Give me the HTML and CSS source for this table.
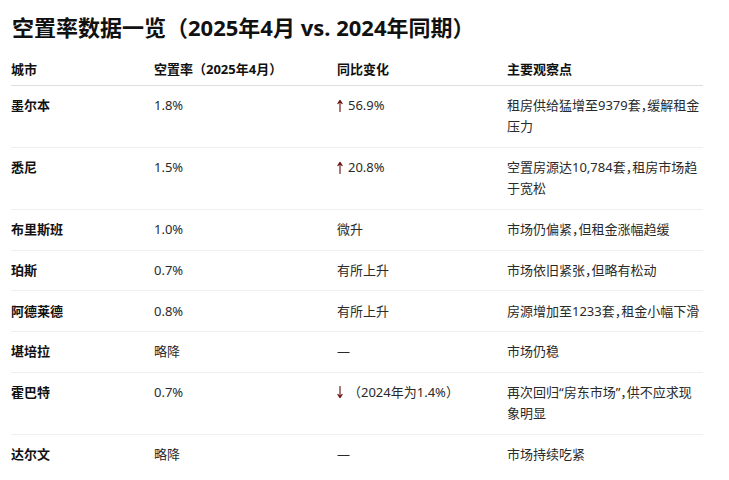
FILE: index.html
```html
<!DOCTYPE html>
<html lang="zh-CN">
<head>
<meta charset="utf-8">
<title>空置率数据一览</title>
<link rel="stylesheet" href="styles.css">
</head>
<body>
<main class="page">
  <h1 class="title">空置率数据一览（2025年4月 vs. 2024年同期）</h1>
  <table class="data">
    <colgroup>
      <col class="c-city">
      <col class="c-rate">
      <col class="c-change">
      <col class="c-note">
    </colgroup>
    <thead>
      <tr>
        <th>城市</th>
        <th>空置率（2025年4月）</th>
        <th>同比变化</th>
        <th>主要观察点</th>
      </tr>
    </thead>
    <tbody>
      <tr>
        <td class="city">墨尔本</td>
        <td>1.8%</td>
        <td><svg class="arrow" viewBox="0 0 6 13" aria-label="上升"><path d="M3 1.6V12.6M0.9 4.6L3 1.4L5.1 4.6"/></svg>56.9%</td>
        <td class="note">租房供给猛增至9379套，缓解租金压力</td>
      </tr>
      <tr>
        <td class="city">悉尼</td>
        <td>1.5%</td>
        <td><svg class="arrow" viewBox="0 0 6 13" aria-label="上升"><path d="M3 1.6V12.6M0.9 4.6L3 1.4L5.1 4.6"/></svg>20.8%</td>
        <td class="note">空置房源达10,784套，租房市场趋于宽松</td>
      </tr>
      <tr>
        <td class="city">布里斯班</td>
        <td>1.0%</td>
        <td>微升</td>
        <td class="note">市场仍偏紧，但租金涨幅趋缓</td>
      </tr>
      <tr>
        <td class="city">珀斯</td>
        <td>0.7%</td>
        <td>有所上升</td>
        <td class="note">市场依旧紧张，但略有松动</td>
      </tr>
      <tr>
        <td class="city">阿德莱德</td>
        <td>0.8%</td>
        <td>有所上升</td>
        <td class="note">房源增加至1233套，租金小幅下滑</td>
      </tr>
      <tr>
        <td class="city">堪培拉</td>
        <td>略降</td>
        <td>—</td>
        <td class="note">市场仍稳</td>
      </tr>
      <tr>
        <td class="city">霍巴特</td>
        <td>0.7%</td>
        <td><svg class="arrow" viewBox="0 0 6 13" aria-label="下降"><path d="M3 0.4V11.4M0.9 8.4L3 11.6L5.1 8.4"/></svg>（2024年为1.4%）</td>
        <td class="note">再次回归“房东市场”，供不应求现象明显</td>
      </tr>
      <tr>
        <td class="city">达尔文</td>
        <td>略降</td>
        <td>—</td>
        <td class="note">市场持续吃紧</td>
      </tr>
    </tbody>
  </table>
</main>
</body>
</html>
```

FILE: styles.css
```css
html, body {
  margin: 0;
  padding: 0;
  background: #ffffff;
}

body {
  font-family: "Noto Sans", "Noto Sans CJK SC", sans-serif;
  color: #222222;
}

.page {
  padding: 11px 0 0 11px;
}

.title {
  margin: 0 0 11px 1px;
  font-size: 22px;
  line-height: 32px;
  font-weight: 700;
  color: #111111;
}

.data {
  border-collapse: collapse;
  table-layout: fixed;
  width: 692px;
  font-size: 13px;
  line-height: 21.25px;
}

.c-city { width: 143px; }
.c-rate { width: 183px; }
.c-change { width: 170px; }
.c-note { width: 196px; }

.data th {
  text-align: left;
  font-weight: 700;
  color: #111111;
  padding: 5px 0 4.5px 0;
  border-bottom: 1px solid #dddddd;
}

.data td {
  padding: 9.25px 0;
  vertical-align: top;
  border-bottom: 1px solid #efefef;
  color: #2a2a2a;
}

.data tbody tr:last-child td {
  border-bottom: none;
}

.data td.city {
  font-weight: 700;
  color: #111111;
}

.data td.note {
  font-feature-settings: "halt";
}

.arrow {
  width: 6px;
  height: 13px;
  margin: 0 5px 0 0;
  vertical-align: -2px;
  fill: none;
  stroke: #6e1616;
  stroke-width: 1.15;
  stroke-linecap: round;
  stroke-linejoin: round;
}
```
